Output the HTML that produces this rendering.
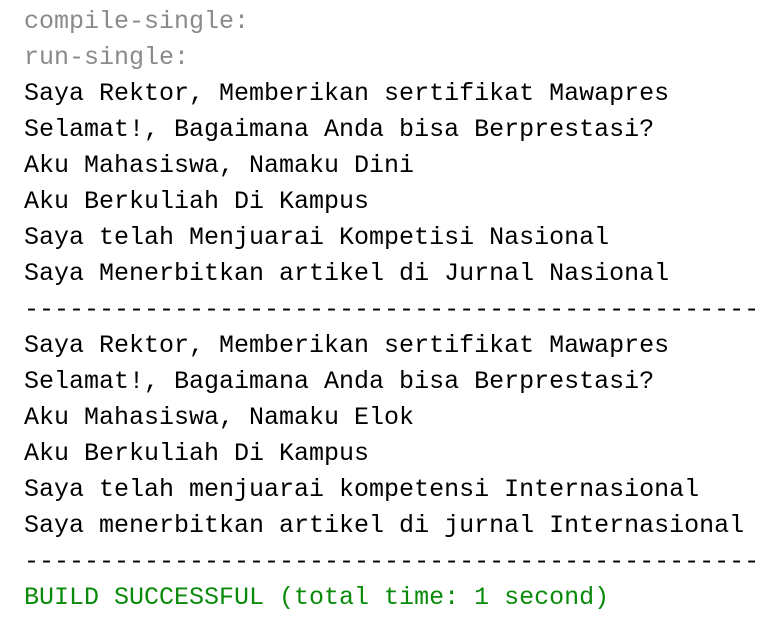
<!DOCTYPE html>
<html><head><meta charset="utf-8"><style>
html,body{margin:0;padding:0;background:#fff;width:784px;height:638px;overflow:hidden}
pre{margin:0;position:absolute;left:24px;top:4px;width:734px;overflow:hidden;font-family:"Liberation Mono","Courier New",monospace;font-size:25px;line-height:36px;color:#000;white-space:pre}
.g{color:#8a8a8a}.s{color:#0a8a0a}
</style></head><body><pre><span class="g">compile-single:
run-single:</span>
Saya Rektor, Memberikan sertifikat Mawapres
Selamat!, Bagaimana Anda bisa Berprestasi?
Aku Mahasiswa, Namaku Dini
Aku Berkuliah Di Kampus
Saya telah Menjuarai Kompetisi Nasional
Saya Menerbitkan artikel di Jurnal Nasional
--------------------------------------------------
Saya Rektor, Memberikan sertifikat Mawapres
Selamat!, Bagaimana Anda bisa Berprestasi?
Aku Mahasiswa, Namaku Elok
Aku Berkuliah Di Kampus
Saya telah menjuarai kompetensi Internasional
Saya menerbitkan artikel di jurnal Internasional
--------------------------------------------------
<span class="s">BUILD SUCCESSFUL (total time: 1 second)</span></pre></body></html>
